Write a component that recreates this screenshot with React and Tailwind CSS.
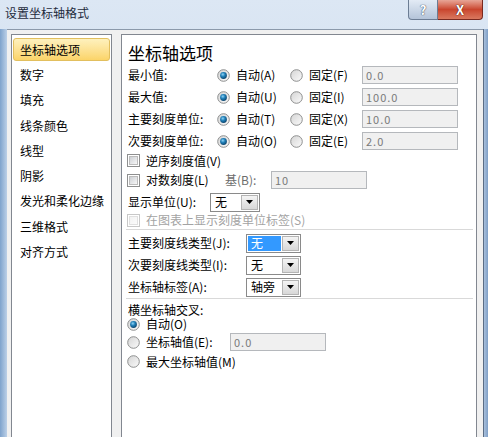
import React from 'react';

const navItems = ['坐标轴选项', '数字', '填充', '线条颜色', '线型', '阴影', '发光和柔化边缘', '三维格式', '对齐方式'];

const Radio = ({ checked }) => (
  <svg width="13" height="13" viewBox="0 0 13 13" className="shrink-0">
    <defs>
      <linearGradient id="rg-off" x1="0" y1="0" x2="1" y2="1">
        <stop offset="0" stopColor="#d4d4d4" />
        <stop offset="1" stopColor="#fbfbfb" />
      </linearGradient>
      <radialGradient id="rg-on" cx="0.4" cy="0.35" r="0.7">
        <stop offset="0" stopColor="#8fd3f5" />
        <stop offset="0.45" stopColor="#1f7fb8" />
        <stop offset="1" stopColor="#0b3f66" />
      </radialGradient>
    </defs>
    <circle cx="6.5" cy="6.5" r="5.8" fill="url(#rg-off)" stroke="#8e8f8f" strokeWidth="1" />
    {checked && <circle cx="6.5" cy="6.5" r="3.4" fill="url(#rg-on)" />}
  </svg>
);

const Checkbox = ({ disabled }) => (
  <span
    className={`w-[13px] h-[13px] shrink-0 border flex items-center justify-center bg-white ${
      disabled ? 'border-[#c8c8c8]' : 'border-[#8e8f8f]'
    }`}
  >
    <span
      className={`w-[9px] h-[9px] border bg-gradient-to-br ${
        disabled ? 'border-[#e0e0e0] from-[#f2f2f2] to-[#fbfbfb]' : 'border-[#bcbcbc] from-[#cdd0d4] to-[#f7f7f7]'
      }`}
    />
  </span>
);

const TextBox = ({ value, width = 'w-[96px]' }) => (
  <div
    className={`${width} h-[18px] border border-[#b5b8bc] bg-[#f0f0f0] flex items-center px-[3px] text-[11px] text-[#7a7a7a] tracking-[1px]`}
  >
    {value}
  </div>
);

const Select = ({ value, width = 'w-[55px]', active }) => (
  <div className={`${width} h-[19px] border border-[#8a8a8a] bg-white flex items-center p-[1px]`}>
    <div
      className={`flex-1 min-w-0 h-full mr-[1px] flex items-center px-[3px] whitespace-nowrap ${
        active ? 'bg-[#3399ff] text-white' : ''
      }`}
    >
      {value}
    </div>
    <div className="w-[17px] h-full shrink-0 border border-[#b4b4b4] bg-gradient-to-b from-[#f4f4f4] to-[#d8d8d8] flex items-center justify-center">
      <svg width="7" height="4" viewBox="0 0 7 4">
        <path d="M0 0h7L3.5 4z" fill="#000" />
      </svg>
    </div>
  </div>
);

const BoundRow = ({ label, auto, fixed, value }) => (
  <div className="h-[22px] flex items-center">
    <span className="w-[89px]">{label}</span>
    <span className="w-[73px] flex items-center gap-[6px]">
      <Radio checked />
      <span>{auto}</span>
    </span>
    <span className="w-[72px] flex items-center gap-[6px]">
      <Radio />
      <span>{fixed}</span>
    </span>
    <TextBox value={value} />
  </div>
);

const Separator = ({ className }) => (
  <div className={`flex flex-col ml-[-2px] mr-[3px] ${className}`}>
    <div className="h-px bg-[#d9d9d9]" />
    <div className="h-px bg-white" />
  </div>
);

export default function App() {
  return (
    <div className="w-[488px] h-[437px] overflow-hidden flex flex-col bg-gradient-to-b from-[#dce7f4] to-[#b9cde6] font-['Noto_Sans_CJK_SC','Liberation_Sans',sans-serif] text-[12px] leading-none text-black select-none">
      {/* title bar */}
      <div className="h-[29px] shrink-0 flex items-start">
        <div className="pl-[5px] pt-[7px] text-[12px] text-[#1e2b3c] flex-1">设置坐标轴格式</div>
        <div className="flex mr-[5px]">
          <div className="w-[30px] h-[20px] rounded-bl-[4px] border border-t-0 border-[#6c7d94] bg-gradient-to-b from-[#e3ebf5] to-[#b4c4d9] flex items-center justify-center text-[13px] font-bold text-white [text-shadow:0_0_1px_#3a4a60,0_0_1px_#3a4a60]">
            ?
          </div>
          <div className="w-[45px] h-[20px] rounded-br-[4px] border border-t-0 border-l-0 border-[#7a2a20] bg-gradient-to-b from-[#e7a597] via-[#c9452e] to-[#d9785f] flex items-center justify-center text-[13px] font-bold text-white [text-shadow:0_0_1px_#4a1208,0_0_1px_#4a1208]">
            X
          </div>
        </div>
      </div>

      {/* client */}
      <div className="flex-1 flex min-h-0">
        <div className="w-[7px] shrink-0 bg-gradient-to-r from-[#7fa3cc] to-[#bcd0e7]" />
        <div className="flex-1 flex bg-[#f0f0f0] border-t border-[#8b99ab] pt-[4px] pl-[4px] pr-[6px]">
          {/* nav list */}
          <div className="w-[101px] shrink-0 bg-white border border-[#828790] border-b-0 pt-[2px] px-px">
            {navItems.map((item, i) => (
              <div key={item} className="h-[25.3px] py-[1px]">
                <div
                  className={`h-full flex items-center pl-[6px] rounded-[3px] border ${
                    i === 0
                      ? 'bg-gradient-to-b from-[#fef1bd] to-[#fbd468] border-[#e2bf5e]'
                      : 'border-transparent'
                  }`}
                >
                  {item}
                </div>
              </div>
            ))}
          </div>

          <div className="w-[9px] shrink-0" />

          {/* options panel */}
          <div className="flex-1 bg-white border border-[#828790] border-b-0 pl-[6px] pt-[6px] flex flex-col">
            <div className="h-[23px] flex items-center text-[17px]">坐标轴选项</div>
            <BoundRow label="最小值:" auto="自动(A)" fixed="固定(F)" value="0.0" />
            <BoundRow label="最大值:" auto="自动(U)" fixed="固定(I)" value="100.0" />
            <BoundRow label="主要刻度单位:" auto="自动(T)" fixed="固定(X)" value="10.0" />
            <BoundRow label="次要刻度单位:" auto="自动(O)" fixed="固定(E)" value="2.0" />

            <div className="h-[17px] flex items-center gap-[6px] -ml-px">
              <Checkbox />
              <span>逆序刻度值(V)</span>
            </div>
            <div className="h-[22px] flex items-center -ml-px">
              <Checkbox />
              <span className="ml-[6px] w-[79px]">对数刻度(L)</span>
              <span className="w-[46px] text-[#6d6d6d]">基(B):</span>
              <TextBox value="10" />
            </div>
            <div className="h-[22px] flex items-center">
              <span className="w-[82px]">显示单位(U):</span>
              <Select value="无" width="w-[50px]" />
            </div>
            <div className="h-[14px] flex items-center gap-[6px] -ml-px text-[#a3a3a3]">
              <Checkbox disabled />
              <span>在图表上显示刻度单位标签(S)</span>
            </div>

            <Separator className="mt-[2px]" />

            <div className="h-[22px] flex items-center mt-[1px]">
              <span className="w-[118px]">主要刻度线类型(J):</span>
              <Select value="无" active />
            </div>
            <div className="h-[22px] flex items-center">
              <span className="w-[118px]">次要刻度线类型(I):</span>
              <Select value="无" />
            </div>
            <div className="h-[22px] flex items-center">
              <span className="w-[118px]">坐标轴标签(A):</span>
              <Select value="轴旁" />
            </div>

            <Separator className="mt-0" />

            <div className="h-[15px] flex items-center mt-[2px]">横坐标轴交叉:</div>
            <div className="h-[14px] flex items-center gap-[6px] -ml-px">
              <Radio checked />
              <span>自动(O)</span>
            </div>
            <div className="h-[22px] flex items-center -ml-px">
              <Radio />
              <span className="ml-[6px] w-[84px]">坐标轴值(E):</span>
              <TextBox value="0.0" />
            </div>
            <div className="h-[17px] flex items-center gap-[6px] -ml-px">
              <Radio />
              <span>最大坐标轴值(M)</span>
            </div>
          </div>
        </div>
        <div className="w-[5px] shrink-0 border-l border-[#5b6d85] bg-gradient-to-r from-[#a9c0dc] to-[#7f9fc6]" />
      </div>
    </div>
  );
}
